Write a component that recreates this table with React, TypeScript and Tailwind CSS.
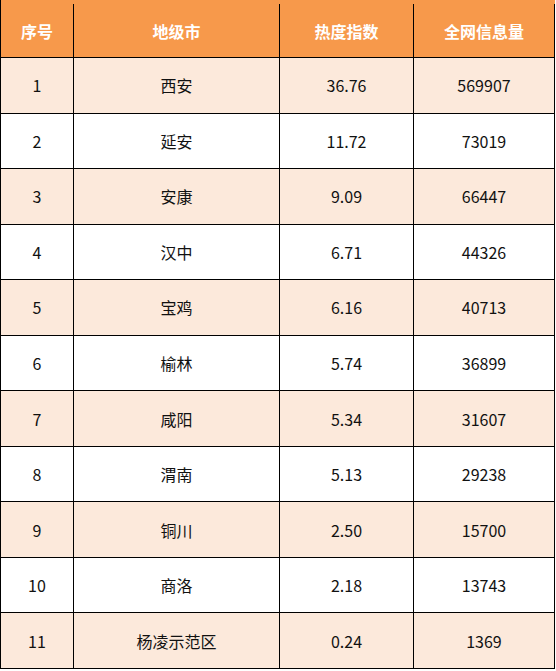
import React from "react";

type Row = {
  idx: number;
  city: string;
  heat: string;
  volume: string;
};

const rows: Row[] = [
  { idx: 1, city: "西安", heat: "36.76", volume: "569907" },
  { idx: 2, city: "延安", heat: "11.72", volume: "73019" },
  { idx: 3, city: "安康", heat: "9.09", volume: "66447" },
  { idx: 4, city: "汉中", heat: "6.71", volume: "44326" },
  { idx: 5, city: "宝鸡", heat: "6.16", volume: "40713" },
  { idx: 6, city: "榆林", heat: "5.74", volume: "36899" },
  { idx: 7, city: "咸阳", heat: "5.34", volume: "31607" },
  { idx: 8, city: "渭南", heat: "5.13", volume: "29238" },
  { idx: 9, city: "铜川", heat: "2.50", volume: "15700" },
  { idx: 10, city: "商洛", heat: "2.18", volume: "13743" },
  { idx: 11, city: "杨凌示范区", heat: "0.24", volume: "1369" },
];

const cols = "grid grid-cols-[73px_206px_134px_141px]";
const cell = "flex items-center justify-center border-r border-black";

export default function App() {
  return (
    <div
      className="min-h-[671px] w-[556px] bg-white"
      style={{ fontFamily: '"Noto Sans CJK SC", "Noto Sans", sans-serif' }}
    >
      <div className="w-[555px] border-l border-black">
        {/* 表头 */}
        <div
          className={`${cols} h-[58px] border-b border-black bg-[#f7994b] pt-[4px] text-[16px] font-bold text-white`}
        >
          <div className={cell}>序号</div>
          <div className={cell}>地级市</div>
          <div className={cell}>热度指数</div>
          <div className={cell}>全网信息量</div>
        </div>

        {rows.map((r) => (
          <div
            key={r.idx}
            className={`${cols} h-[55.55px] border-b border-black text-[16px] text-[#111] ${
              r.idx % 2 === 1 ? "bg-[#fce9db]" : "bg-white"
            }`}
          >
            <div className={cell}>{r.idx}</div>
            <div className={cell}>{r.city}</div>
            <div className={cell}>{r.heat}</div>
            <div className={cell}>{r.volume}</div>
          </div>
        ))}
      </div>
    </div>
  );
}
